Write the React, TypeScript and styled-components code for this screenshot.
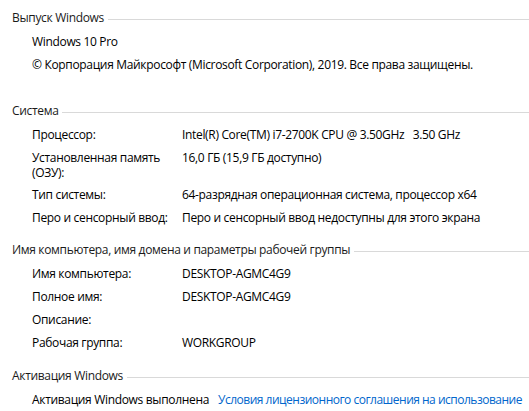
import React from "react";
import styled, { createGlobalStyle } from "styled-components";

const Global = createGlobalStyle`
  html, body { margin: 0; padding: 0; background: #ffffff; }
  body {
    font-family: "Open Sans", "Noto Sans", "Liberation Sans", sans-serif;
    font-size: 12px;
    color: #000000;
    -webkit-font-smoothing: antialiased;
  }
`;

const Page = styled.div`
  width: 529px;
  height: 411px;
  overflow: hidden;
  padding-top: 10px;
  box-sizing: border-box;
  letter-spacing: -0.33px;
`;

const Section = styled.section<{ $top: number }>`
  margin-top: ${(p) => p.$top}px;
  display: flex;
  flex-direction: column;
`;

const Header = styled.div`
  display: flex;
  align-items: center;
  gap: 4px;
  height: 16px;
  line-height: 16px;
  padding-left: 12px;
  margin-bottom: 5px;
  white-space: nowrap;
  color: #1a1a1a;
`;

const Rule = styled.div`
  flex: 1;
  height: 1px;
  background: #d9d9d9;
  margin-top: 2px;
`;

const Row = styled.div`
  display: grid;
  grid-template-columns: 150px 1fr;
  padding: 3px 0 4px 32px;
  line-height: 16px;
  min-height: 16px;
`;

const Label = styled.div<{ $tight?: boolean }>`
  line-height: ${(p) => (p.$tight ? 15 : 16)}px;
  padding-right: 8px;
`;

const Value = styled.div`
  white-space: pre;
`;

const Plain = styled.div`
  padding: 3px 0 4px 32px;
  line-height: 16px;
  white-space: nowrap;
`;

const Activation = styled.div`
  display: flex;
  gap: 9px;
  padding: 3px 0 4px 32px;
  line-height: 16px;
  white-space: nowrap;
`;

const Link = styled.a`
  color: #0066cc;
  text-decoration: none;
  cursor: pointer;
  letter-spacing: -0.5px;
`;

type Item = { label: string; value: string; tight?: boolean };

const system: Item[] = [
  { label: "Процессор:", value: "Intel(R) Core(TM) i7-2700K CPU @ 3.50GHz   3.50 GHz" },
  { label: "Установленная память (ОЗУ):", value: "16,0 ГБ (15,9 ГБ доступно)", tight: true },
  { label: "Тип системы:", value: "64-разрядная операционная система, процессор x64" },
  { label: "Перо и сенсорный ввод:", value: "Перо и сенсорный ввод недоступны для этого экрана" },
];

const computer: Item[] = [
  { label: "Имя компьютера:", value: "DESKTOP-AGMC4G9" },
  { label: "Полное имя:", value: "DESKTOP-AGMC4G9" },
  { label: "Описание:", value: "" },
  { label: "Рабочая группа:", value: "WORKGROUP" },
];

function Rows({ items }: { items: Item[] }) {
  return (
    <>
      {items.map((it) => (
        <Row key={it.label}>
          <Label $tight={it.tight}>{it.label}</Label>
          <Value>{it.value}</Value>
        </Row>
      ))}
    </>
  );
}

export default function App() {
  return (
    <>
      <Global />
      <Page>
        <Section $top={0}>
          <Header>
            Выпуск Windows
            <Rule />
          </Header>
          <Plain>Windows 10 Pro</Plain>
          <Plain>© Корпорация Майкрософт (Microsoft Corporation), 2019. Все права защищены.</Plain>
        </Section>
        <Section $top={26}>
          <Header>
            Система
            <Rule />
          </Header>
          <Rows items={system} />
        </Section>
        <Section $top={12}>
          <Header>
            Имя компьютера, имя домена и параметры рабочей группы
            <Rule />
          </Header>
          <Rows items={computer} />
        </Section>
        <Section $top={13}>
          <Header>
            Активация Windows
            <Rule />
          </Header>
          <Activation>
            <span>Активация Windows выполнена</span>
            <Link>Условия лицензионного соглашения на использование</Link>
          </Activation>
        </Section>
      </Page>
    </>
  );
}
